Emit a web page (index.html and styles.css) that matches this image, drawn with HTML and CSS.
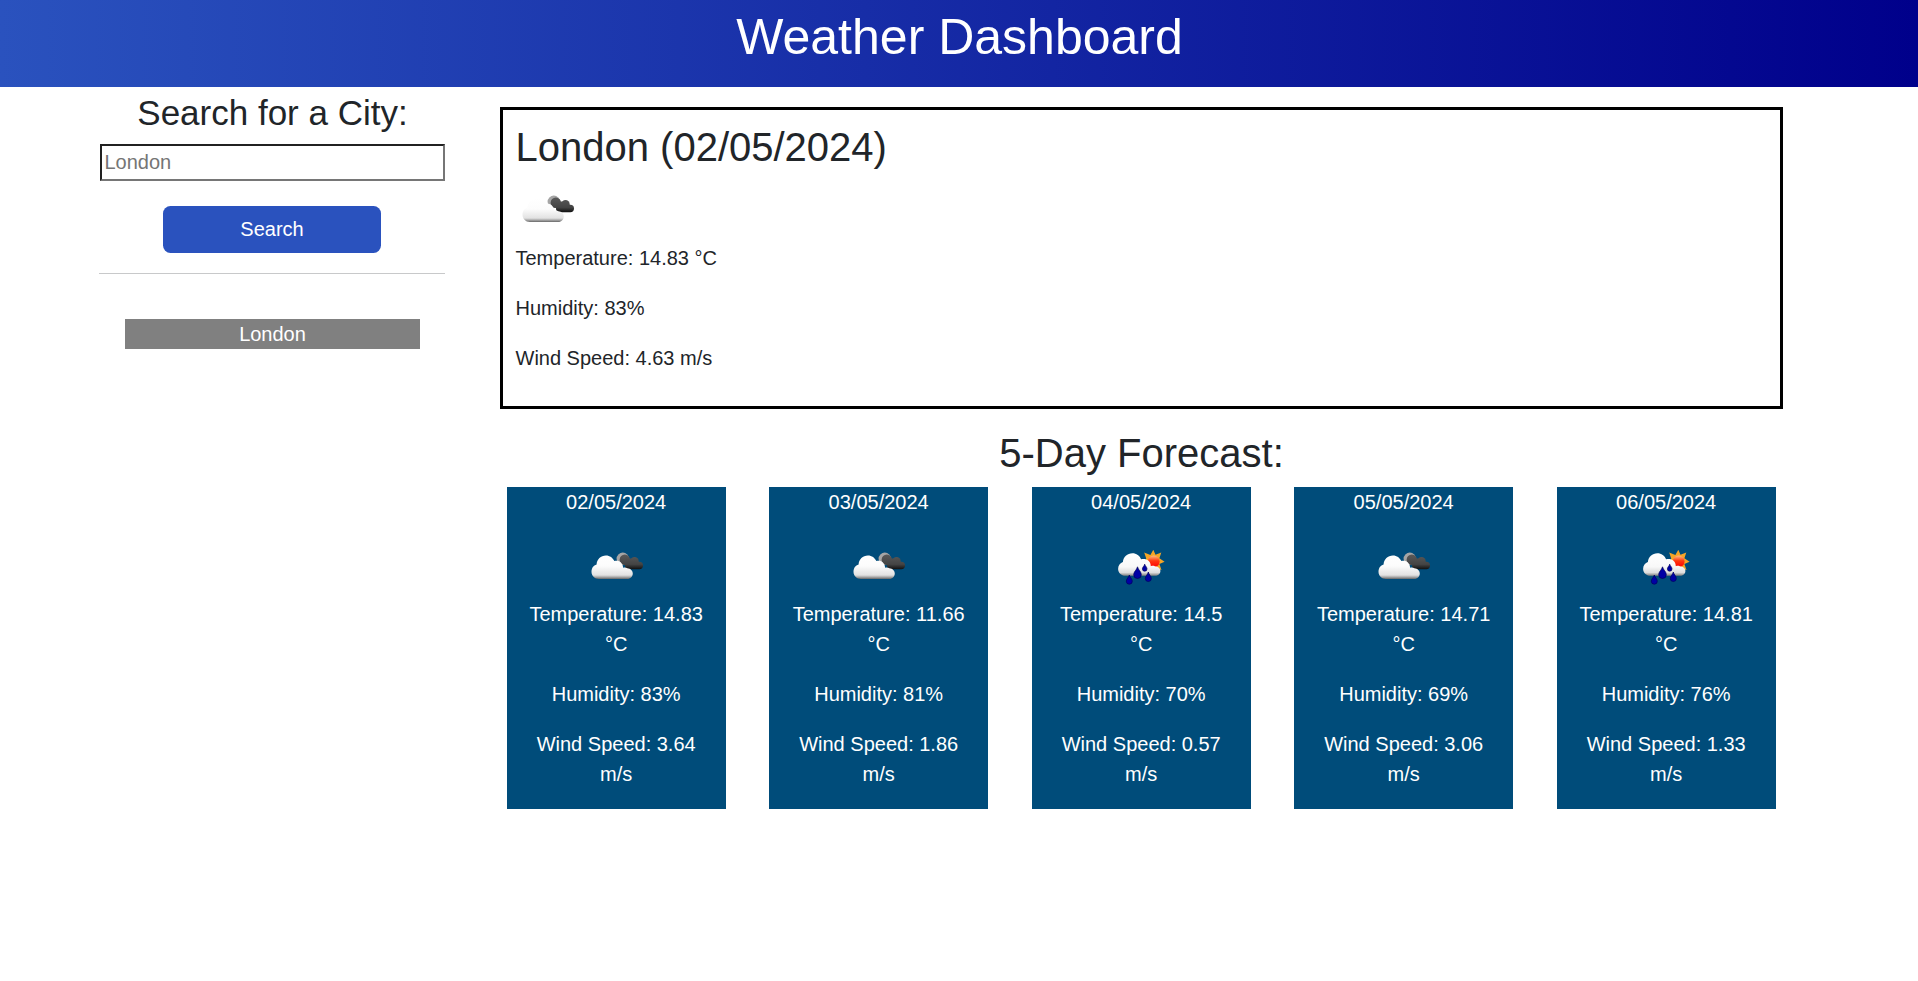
FILE: index.html
```html
<!DOCTYPE html>
<html lang="en">
<head>
<meta charset="utf-8">
<title>Weather Dashboard</title>
<link rel="stylesheet" href="styles.css">
</head>
<body>
<svg class="defs" width="0" height="0" aria-hidden="true">
  <defs>
    <linearGradient id="white" gradientUnits="userSpaceOnUse" x1="0" y1="18" x2="0" y2="42.5">
      <stop offset="0" stop-color="#fff"/><stop offset=".45" stop-color="#fcfcfc"/><stop offset=".82" stop-color="#e2e2e2"/><stop offset=".9" stop-color="#aaa"/><stop offset="1" stop-color="#555"/>
    </linearGradient>
    <linearGradient id="dark" gradientUnits="userSpaceOnUse" x1="0" y1="17" x2="0" y2="33">
      <stop offset="0" stop-color="#5a5a5a"/><stop offset=".65" stop-color="#444"/><stop offset="1" stop-color="#080808"/>
    </linearGradient>
    <linearGradient id="rain" gradientUnits="userSpaceOnUse" x1="0" y1="16" x2="0" y2="39">
      <stop offset="0" stop-color="#fff"/><stop offset=".6" stop-color="#f8f8f8"/><stop offset=".85" stop-color="#ddd"/><stop offset="1" stop-color="#777"/>
    </linearGradient>
    <linearGradient id="sun" x1="0" y1="0" x2="0" y2="1">
      <stop offset="0" stop-color="#ffc080"/><stop offset=".45" stop-color="#ff3810"/><stop offset="1" stop-color="#f00"/>
    </linearGradient>
    <symbol id="clouds" viewBox="0 0 62.5 62.5">
      <circle cx="37.800" cy="21.800" r="6.200" fill="#a5a5a5"/>
      <g fill="url(#dark)">
        <circle cx="39.800" cy="22.800" r="5.200"/>
        <circle cx="45" cy="26" r="4.500"/>
        <circle cx="49.500" cy="24.300" r="4.200"/>
        <rect x="40" y="24.800" width="18" height="7.400" rx="3.700"/>
      </g>
      <path fill="url(#white)" d="M14 42c-4.500 0-7.500-3.200-7.500-7.200 0-3.500 2-6.400 5.100-7.200.1-5.300 4.300-9.200 9.300-9.200 4 0 7 2.300 8.500 5.700 4.300-1.300 8.600 1.500 8.700 6.700 1.200-.7 3.300-.3 4.300.4 3.200.3 5.400 2.400 5.400 5.300s-2.300 5.500-5.500 5.500z"/>
    </symbol>
    <symbol id="showers" viewBox="0 0 62.5 62.5">
      <path fill="#f5a526" d="m43.300 12.800 2.200 5 5.800-2.200-1.900 5.700 5.200 3.500-5.200 2.200 2.100 6-5.700-1.800-6 1-4.600-7 1-3.700-2-5.900 6.200 2.400z"/>
      <circle cx="43.700" cy="24.400" r="5.900" fill="url(#sun)"/>
      <path fill="url(#rain)" d="M15.500 38.700c-4.400 0-7.400-3.100-7.400-6.800 0-3.400 2.100-6 4.800-6.800.3-5 4.500-8.800 9.500-8.800 4 0 7.300 2.400 8.700 6 4.300-1.400 9.700 1 9.700 6.900 1.500-.6 3-.5 4 0 3.300.2 5.600 2.200 5.600 4.700 0 3-2.400 4.800-5.400 4.800z"/>
      <g fill="#0000a5" stroke="#00005c" stroke-width=".7">
        <path d="M19.300 38c.5 2.300 3 3.900 3 6.200a3 3 0 0 1-6 0c0-2.300 2.500-3.900 3-6.200z"/>
        <path d="M27.500 29.800c.6 3 3.800 4.900 3.800 7.900a3.800 3.800 0 0 1-7.600 0c0-3 3.200-4.900 3.800-7.900z"/>
        <path d="M34.700 27.200c.4 1.700 2.300 2.900 2.300 4.700a2.300 2.300 0 0 1-4.600 0c0-1.800 1.900-3 2.300-4.700z"/>
        <path d="M38.300 35c.5 2.500 3 4.100 3 6.500a3 3 0 0 1-6 0c0-2.400 2.500-4 3-6.500z"/>
      </g>
    </symbol>
  </defs>
</svg>
<header class="header"><h1 class="title">Weather Dashboard</h1></header>
<div class="layout">
  <aside class="sidebar">
    <h3 class="search-heading">Search for a City:</h3>
    <input class="search-input" type="text" placeholder="London">
    <button class="search-button">Search</button>
    <hr class="divider">
    <div class="history-item">London</div>
  </aside>
  <main class="main">
    <section class="current">
      <h2 class="heading">London (02/05/2024)</h2>
      <svg class="icon"><use href="#clouds"/></svg>
      <p>Temperature: 14.83 °C</p>
      <p>Humidity: 83%</p>
      <p>Wind Speed: 4.63 m/s</p>
    </section>
    <h2 class="heading forecast-heading">5-Day Forecast:</h2>
    <section class="forecast">
      <article class="card"><p>02/05/2024</p><svg class="icon"><use href="#clouds"/></svg><p>Temperature: 14.83 °C</p><p>Humidity: 83%</p><p>Wind Speed: 3.64 m/s</p></article>
      <article class="card"><p>03/05/2024</p><svg class="icon"><use href="#clouds"/></svg><p>Temperature: 11.66 °C</p><p>Humidity: 81%</p><p>Wind Speed: 1.86 m/s</p></article>
      <article class="card"><p>04/05/2024</p><svg class="icon"><use href="#showers"/></svg><p>Temperature: 14.5 °C</p><p>Humidity: 70%</p><p>Wind Speed: 0.57 m/s</p></article>
      <article class="card"><p>05/05/2024</p><svg class="icon"><use href="#clouds"/></svg><p>Temperature: 14.71 °C</p><p>Humidity: 69%</p><p>Wind Speed: 3.06 m/s</p></article>
      <article class="card"><p>06/05/2024</p><svg class="icon"><use href="#showers"/></svg><p>Temperature: 14.81 °C</p><p>Humidity: 76%</p><p>Wind Speed: 1.33 m/s</p></article>
    </section>
  </main>
</div>
</body>
</html>
```
FILE: styles.css
```css
* { box-sizing: border-box; }
body {
  margin: 0;
  background: #fff;
  color: #212529;
  font: 20px/1.5 "Liberation Sans", Arial, sans-serif;
}
.defs { display: block; }
h1, h2, h3 { margin: 0; font-weight: 400; line-height: 1.2; }
p { margin: 0 0 20px; }
.header {
  height: 87px;
  padding: 7px 0 0 1px;
  text-align: center;
  color: #fff;
  background: linear-gradient(to right, #2a52be, #00008b);
}
.title { font-size: 50px; }
.layout { display: flex; padding-left: 99px; }
.sidebar {
  display: flex;
  flex-direction: column;
  width: 346px;
  padding-top: 5px;
}
.search-heading { padding-left: 1px; font-size: 35px; text-align: center; }
.search-input {
  height: 37px;
  margin: 10px 0 0 1px;
  padding: 1px 2.5px;
  border: 2px inset #767676;
  background: #fff;
  font: inherit;
}
.search-input::placeholder { color: #757575; }
.search-button {
  align-self: center;
  width: 218px;
  height: 47px;
  margin-top: 25px;
  padding: 0 0 2px;
  border: 0;
  border-radius: 7.5px;
  background: #2a52be;
  color: #fff;
  font: inherit;
}
.divider {
  width: 100%;
  height: 1px;
  margin: 20px 0 45px;
  border: 0;
  background: #c8c9ca;
}
.history-item {
  width: 295px;
  margin-left: 26px;
  background: #808080;
  color: #fff;
  text-align: center;
}
.main { width: 1283px; margin-left: 55px; padding-top: 20px; }
.current {
  height: 302px;
  padding: 13px 12.5px 0;
  border: 3px solid #000;
}
.heading { font-size: 40px; margin-bottom: 10px; }
.current .heading { margin-bottom: 9px; }
.icon { display: block; width: 62.5px; height: 62.5px; }
.forecast-heading { margin-top: 20px; text-align: center; }
.forecast {
  display: flex;
  gap: 43.75px;
  padding-left: 6.8px;
}
.card {
  flex: none;
  width: 218.75px;
  height: 322px;
  padding: 0 18.75px;
  background: #004c7a;
  color: #fff;
  text-align: center;
}
.card .icon { margin: 0 auto -1px; }
```
